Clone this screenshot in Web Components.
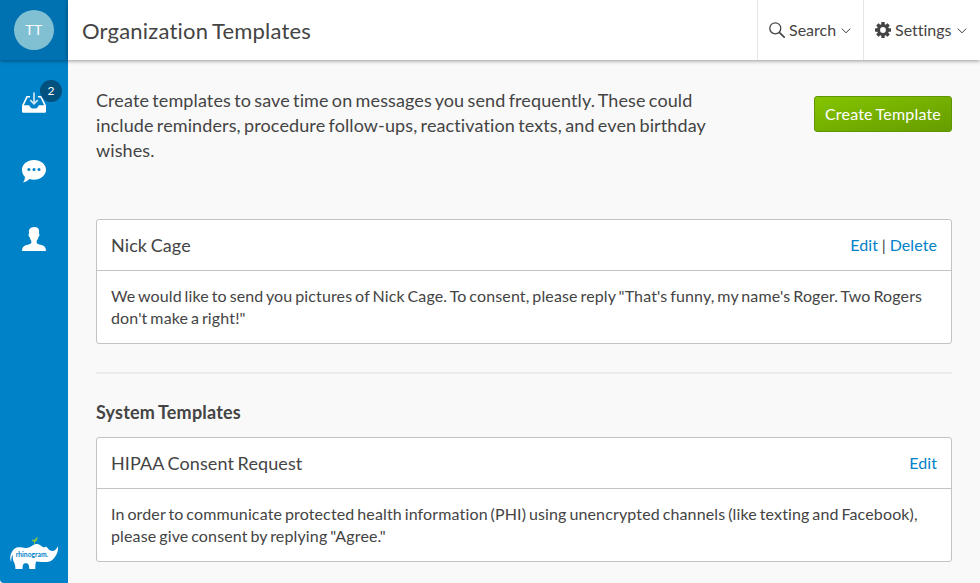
<!DOCTYPE html>
<html lang="en">
<head>
<meta charset="utf-8">
<title>Organization Templates</title>
<style>
html,body{margin:0;height:100%}
body{font-family:Lato,"Liberation Sans",sans-serif;font-size:16px;line-height:22px;color:#444;background:#f9f9f9;overflow:hidden;font-variant-ligatures:none}
</style>
</head>
<body>
<app-shell>
  <side-nav slot="nav" initials="TT">
    <nav-item icon="inbox" count="2"></nav-item>
    <nav-item icon="chat"></nav-item>
    <nav-item icon="person"></nav-item>
  </side-nav>
  <top-bar slot="top" heading="Organization Templates">
    <menu-button icon="search">Search</menu-button>
    <menu-button icon="gear">Settings</menu-button>
  </top-bar>
  <intro-row>Create templates to save time on messages you send frequently. These could include reminders, procedure follow-ups, reactivation texts, and even birthday wishes.<action-button slot="action">Create Template</action-button></intro-row>
  <template-card heading="Nick Cage" actions="Edit,Delete">We would like to send you pictures of Nick Cage. To consent, please reply "That's funny, my name's Roger. Two Rogers don't make a right!"</template-card>
  <section-title>System Templates</section-title>
  <template-card heading="HIPAA Consent Request" actions="Edit">In order to communicate protected health information (PHI) using unencrypted channels (like texting and Facebook), please give consent by replying "Agree."</template-card>
</app-shell>
<script>
const icons = {
  inbox: `<svg width="24" height="22" viewBox="0 0 24 22"><path fill="#fff" d="M0 13.2h6.6c.7 0 .9.4 1.200 1.100.6 1.500 1.600 2.300 4.200 2.300s3.600-.8 4.200-2.300c.3-.7.500-1.100 1.200-1.100H24v6.300a1.300 1.300 0 0 1-1.300 1.300H1.300A1.300 1.300 0 0 1 0 19.500z"/><path fill="none" stroke="#fff" stroke-width="1.600" d="M.8 13.600 5 4.800h3M23.200 13.600 19 4.800h-3"/><path fill="none" stroke="#cfe6f4" stroke-width="1.700" d="M12 .5v11M8.300 8.200l3.700 3.700 3.700-3.700"/></svg>`,
  chat: `<svg width="24" height="23" viewBox="0 0 24 23"><path fill="#fff" d="M12 0c6.700 0 12 4.300 12 9.800s-5.300 9.900-12 9.900c-1.700 0-3.200-.2-4.600-.7C5.700 20.700 3.500 21.900 1 22.400c1.200-1.500 1.900-3.200 2-5.300C1.100 15.300 0 12.700 0 9.800 0 4.300 5.300 0 12 0z"/><g fill="#0082c8"><circle cx="6.900" cy="9.600" r="1.500"/><circle cx="12" cy="9.600" r="1.500"/><circle cx="17" cy="9.600" r="1.500"/></g></svg>`,
  person: `<svg width="24" height="24" viewBox="0 0 24 24"><path fill="#fff" d="M7.500 2.200C8.400.7 10.200 0 12.300 0c3.300 0 5 1.500 4.800 4.600l-.2 2.200c.9 0 .8 2.800-.6 3.400-.3 1.700-.9 2.700-1.600 3.500v2c.2 1 1.600 1.400 4.700 2.300 3.200.9 4.600 2.700 4.600 6H0c0-3.300 1.400-5.100 4.600-6 3.100-.9 4.500-1.300 4.700-2.300v-2c-.7-.8-1.300-1.800-1.600-3.500-1.400-.6-1.500-3.400-.6-3.400l-.3-2.500c-.1-.9.200-1.600.7-2.100z"/></svg>`,
  search: `<svg width="16" height="17" viewBox="0 0 16 17" fill="none" stroke="#444"><circle cx="6.300" cy="6.300" r="5.500" stroke-width="1.300"/><path stroke-width="1.700" d="m10.300 10.300 5.400 5.400"/></svg>`,
  gear: `<svg width="16" height="16" viewBox="-8 -8 16 16"><g fill="#444"><rect x="-1.700" y="-8" width="3.400" height="16" rx=".5"/><rect x="-1.700" y="-8" width="3.400" height="16" rx=".5" transform="rotate(45)"/><rect x="-1.700" y="-8" width="3.400" height="16" rx=".5" transform="rotate(90)"/><rect x="-1.700" y="-8" width="3.400" height="16" rx=".5" transform="rotate(135)"/><circle r="6"/></g><circle r="2.900" fill="#fff"/></svg>`,
  rhino: `<svg width="50" height="34" viewBox="0 0 50 34"><path fill="#fff" d="M2.400 15C4 10.700 7 8.900 11.500 9.300c4 .5 6 1.300 9 0 2.700-1.300 4.300-3.300 7-3.300 2.800 0 5 2.100 7.200 3.600 1.900-1.300 2.800-1 3.700.2 1.300 1.800 2.600 2.900 4.200 3.200 2.600.3 4.400-1 6.300-4.700.6 3.600-.5 7.500-3 10.700-2.600 4-5.800 5.200-10.600 5-2.500.1-5.500.1-8-.4-.9 1.400-1 3.900-1 7.400h-6c-.1-2.800-.5-4.600-1.500-5.300-1.200-.6-2.900-.5-4 0-.9.700-1.300 2.500-1.300 5.300H6.400c.1-3-.5-4.800-1.400-6.800-1.100-2-1.600-4.300-1.100-7.500-1.400 1.700-1.900 3.800-1.600 7.300C.8 21.500.9 18 2.400 15z"/><path fill="#8cc63f" d="M22.800 1.700c1.700.3 2.700.2 3.600-1C27 0 28-.5 29-.4c-.4.6-.5 1.200-.9 2-.5 1.500-1.200 2.200-2.300 2.400v2h-.8V3.700c-1.100-.1-1.900-.9-2.200-2z"/><text x="6.800" y="18.800" font-family="Lato,sans-serif" font-size="8" font-weight="700" fill="#0082c8" textLength="32.400" lengthAdjust="spacingAndGlyphs">rhinogram.</text></svg>`,
  caret: `<svg width="10" height="6" viewBox="0 0 10 6"><path d="m.7.6 4.300 4.200L9.300.6" fill="none" stroke="#444" stroke-width="1"/></svg>`
};

function define(name, css, html) {
  customElements.define(name, class extends HTMLElement {
    constructor() { super(); this.attachShadow({ mode: 'open' }); }
    connectedCallback() { this.shadowRoot.innerHTML = `<style>${css}</style>${html(this)}`; }
  });
}

define('app-shell', `
:host{display:grid;grid-template-columns:68px 1fr;height:583px;background:#f9f9f9}
.page{display:flex;flex-direction:column;min-width:0}
main{display:flex;flex-direction:column;padding:28px 28px 0}`,
() => `<slot name="nav"></slot><div class="page"><slot name="top"></slot><main><slot></slot></main></div>`);

define('side-nav', `
:host{display:flex;flex-direction:column;background:#0082c8;border-bottom-left-radius:4px}
.user{height:60px;display:grid;place-items:center;background:#0071b1;box-shadow:0 1px 4px rgba(0,0,0,.4)}
.avatar{width:40px;height:40px;border-radius:50%;background:#81c0d3;color:#fff;font-size:14px;line-height:40px;text-align:center;letter-spacing:.5px}
nav{display:flex;flex-direction:column;padding-top:9px;flex:1}
.logo{padding:0 0 11px 9px;height:34px}.logo svg{display:block;overflow:visible}`,
el => `<div class="user"><div class="avatar">${el.getAttribute('initials')}</div></div><nav><slot></slot></nav><div class="logo">${icons.rhino}</div>`);

define('nav-item', `
:host{display:grid;place-items:center;height:68px;position:relative}
svg{display:block}
.badge{position:absolute;left:40px;top:11px;width:22px;height:22px;border-radius:50%;background:#00517d;color:#fff;font-size:12px;line-height:22px;text-align:center}`,
el => icons[el.getAttribute('icon')] + (el.hasAttribute('count') ? `<span class="badge">${el.getAttribute('count')}</span>` : ''));

define('top-bar', `
:host{display:flex;height:60px;background:#fff;box-shadow:0 1px 4px rgba(0,0,0,.4)}
h1{margin:0;flex:1;padding:1px 0 0 14px;font-size:22px;line-height:60px;font-weight:400;letter-spacing:.2px;word-spacing:-1.4px}`,
el => `<h1>${el.getAttribute('heading')}</h1><slot></slot>`);

define('menu-button', `
:host{display:flex;align-items:center;box-sizing:border-box;width:106px;border-left:1px solid #e5e5e5;padding-left:11px;gap:4px}
:host(:last-child){width:117px}
svg{display:block}
.caret{padding:2px 0 0 1px}`,
el => `${icons[el.getAttribute('icon')]}<span><slot></slot></span><span class="caret">${icons.caret}</span>`);

define('intro-row', `
:host{display:flex;justify-content:space-between;align-items:flex-start;height:131px}
p{margin:0;width:640px;font-size:18px;line-height:25px;letter-spacing:.11px;word-spacing:-1.45px}
.action{padding-top:8px}`,
() => `<p><slot></slot></p><div class="action"><slot name="action"></slot></div>`);

define('action-button', `
:host{display:block}
button{display:block;box-sizing:border-box;width:138px;height:36px;padding:0;border:1px solid #609500;border-radius:3px;background:linear-gradient(to bottom right,#84c400,#669c00);color:#fff;font:inherit;line-height:34px;letter-spacing:.2px;word-spacing:-1px;font-variant-ligatures:none}`,
() => `<button><slot></slot></button>`);

define('template-card', `
:host{display:block;border:1px solid #c3c3c3;border-radius:3px;background:#fff}
header{display:flex;justify-content:space-between;align-items:center;height:50px;padding:0 14px;border-bottom:1px solid #c3c3c3}
h2{margin:0;font-size:18px;font-weight:400;letter-spacing:.11px;word-spacing:-1.2px}
header span{letter-spacing:.08px;word-spacing:-.4px}
a{color:#0082c8}
p{margin:0;padding:14px;letter-spacing:.14px;word-spacing:-1.4px}`,
el => `<header><h2>${el.getAttribute('heading')}</h2><span>${el.getAttribute('actions').split(',').map(a => `<a>${a}</a>`).join(' | ')}</span></header><p><slot></slot></p>`);

define('section-title', `
:host{display:block;margin-top:28px;border-top:2px solid #ebebeb;height:63px}
h2{margin:0;padding-top:26px;font-size:18px;line-height:24px;font-weight:700;letter-spacing:.2px;word-spacing:-1.2px}`,
() => `<h2><slot></slot></h2>`);
</script>
</body>
</html>
